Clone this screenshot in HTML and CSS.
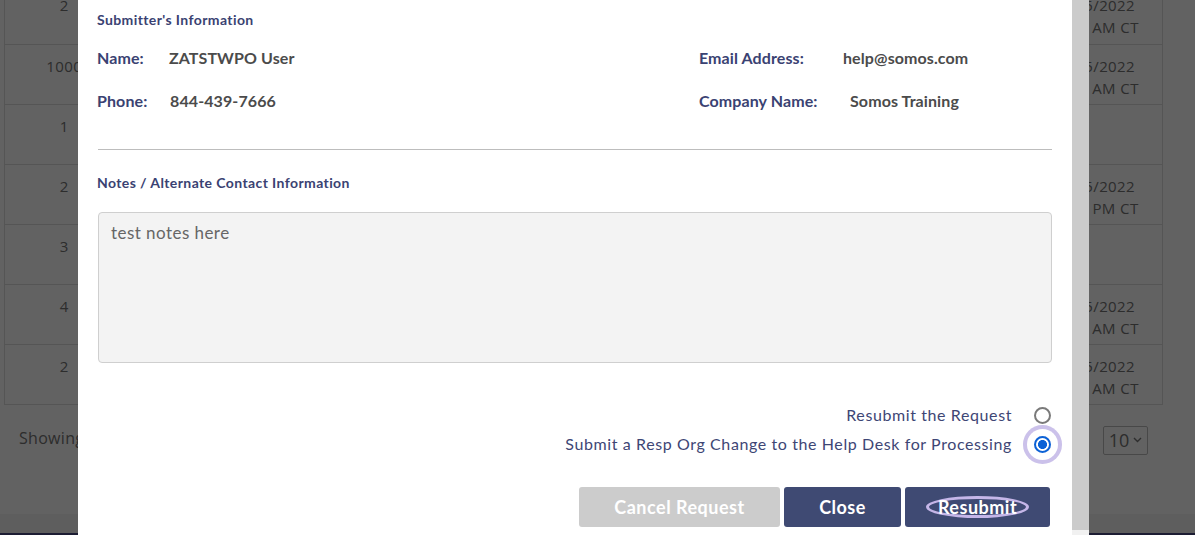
FILE: index.html
```html
<!DOCTYPE html>
<html>
<head>
<meta charset="utf-8">
<link rel="stylesheet" href="styles.css">
</head>
<body>
<div class="page">
  <table class="grid">
    <tr><td class="c-num">2</td><td class="c-mid"></td><td class="c-date">01/25/2022<br>10:41 AM CT</td></tr>
    <tr><td class="c-num">1000</td><td class="c-mid"></td><td class="c-date">01/25/2022<br>10:36 AM CT</td></tr>
    <tr><td class="c-num">1</td><td class="c-mid"></td><td class="c-date"></td></tr>
    <tr><td class="c-num">2</td><td class="c-mid"></td><td class="c-date">01/25/2022<br>12:15 PM CT</td></tr>
    <tr><td class="c-num">3</td><td class="c-mid"></td><td class="c-date"></td></tr>
    <tr><td class="c-num">4</td><td class="c-mid"></td><td class="c-date">01/25/2022<br>10:41 AM CT</td></tr>
    <tr><td class="c-num">2</td><td class="c-mid"></td><td class="c-date">01/25/2022<br>10:36 AM CT</td></tr>
  </table>
  <div class="pager">
    <span class="showing">Showing 1 to 7 of 7 entries</span>
    <span class="pagesize">10 <svg width="9" height="6" viewBox="0 0 9 6"><path d="M1 1l3.5 3.5L8 1" fill="none" stroke="#777" stroke-width="1.4"/></svg></span>
  </div>
  <div class="page-foot"></div>
  <div class="navbar"></div>
</div>
<div class="overlay"></div>
<div class="modal-wrap">
  <div class="modal">
    <h4 class="sec-title">Submitter's Information</h4>
    <div class="info">
      <div class="info-col">
        <div class="field"><span class="lbl lbl-name">Name:</span><span class="val">ZATSTWPO User</span></div>
        <div class="field"><span class="lbl lbl-phone">Phone:</span><span class="val">844-439-7666</span></div>
      </div>
      <div class="info-col">
        <div class="field"><span class="lbl lbl-email">Email Address:</span><span class="val">help@somos.com</span></div>
        <div class="field"><span class="lbl lbl-company">Company Name:</span><span class="val">Somos Training</span></div>
      </div>
    </div>
    <hr class="divider">
    <h4 class="sec-title notes-title">Notes / Alternate Contact Information</h4>
    <div class="notes">test notes here</div>
    <div class="options">
      <div class="opt"><span class="opt-text">Resubmit the Request</span><span class="radio"></span></div>
      <div class="opt"><span class="opt-text">Submit a Resp Org Change to the Help Desk for Processing</span><span class="radio checked"></span></div>
    </div>
    <div class="actions">
      <button class="btn btn-cancel">Cancel Request</button>
      <button class="btn btn-close">Close</button>
      <button class="btn btn-resubmit"><span class="focus-ring">Resubmit</span></button>
    </div>
  </div>
  <div class="scrollbar"><div class="scroll-end"></div></div>
</div>
</body>
</html>
```
FILE: styles.css
```css
* { box-sizing: border-box; }
html, body { margin: 0; padding: 0; }
body {
  width: 1195px;
  height: 535px;
  overflow: hidden;
  background: #fff;
  font-family: "Open Sans", "Liberation Sans", sans-serif;
  position: relative;
}
.page {
  margin-top: -16px;
  display: flex;
  flex-direction: column;
}
.grid {
  margin-left: 4px;
  width: 1159px;
  border-collapse: collapse;
  border-left: 1px solid #dcdcdc;
  border-right: 1px solid #dcdcdc;
  color: #757575;
  font-size: 15px;
  letter-spacing: 0.4px;
}
.grid tr { height: 60px; border-bottom: 1px solid #dcdcdc; }
.grid td { vertical-align: top; padding: 10px 0 0; line-height: 22px; text-align: center; }
.c-num { width: 119px; }
.grid td.c-date { width: 130px; padding-right: 8px; white-space: nowrap; }
.pager {
  height: 109px;
  display: flex;
  align-items: flex-start;
  justify-content: space-between;
  padding: 21px 47px 0 19px;
  color: #757575;
  font-size: 16px;
  letter-spacing: 0.3px;
}
.showing { line-height: 24px; }
.pagesize {
  width: 45px;
  height: 29px;
  border: 1px solid #bbb;
  border-radius: 2px;
  display: flex;
  align-items: center;
  justify-content: center;
  gap: 4px;
  font-size: 18px;
  letter-spacing: 0;
}
.page-foot { height: 19px; background: #f4f4f4; }
.navbar { height: 10px; background: #4a4c85; }
.overlay {
  position: absolute;
  inset: 0;
  background: rgba(0, 0, 0, 0.615);
}
.modal-wrap {
  position: absolute;
  left: 78px;
  top: 0;
  height: 535px;
  display: flex;
}
.modal {
  width: 994px;
  height: 535px;
  background: #fff;
  padding: 10px 20px 0 19px;
  font-family: "Lato", "Liberation Sans", sans-serif;
}
.scrollbar {
  width: 17px;
  height: 535px;
  background: #cbcbcb;
  display: flex;
  flex-direction: column;
  justify-content: flex-end;
}
.scroll-end { height: 5px; background: #f1f1f1; }
.sec-title {
  margin: 0;
  font-size: 14px;
  letter-spacing: 0.4px;
  line-height: 20px;
  font-weight: 700;
  color: #3a4272;
}
.info {
  margin-top: 17px;
  display: flex;
}
.info-col { width: 602px; display: flex; flex-direction: column; gap: 21px; }
.info-col + .info-col { width: auto; }
.field {
  display: flex;
  line-height: 22px;
  font-size: 16px;
  font-weight: 700;
  letter-spacing: 0.1px;
}
.lbl { color: #3a4272; }
.val { color: #4b4b4b; }
.lbl-name { width: 72px; }
.lbl-phone { width: 73px; }
.lbl-email { width: 144px; }
.lbl-company { width: 151px; }
.divider {
  margin: 37px 0 0 1px;
  border: 0;
  border-top: 1px solid #bdbdbd;
  height: 0;
}
.notes-title { margin-top: 23px; }
.notes {
  margin: 19px 0 0 1px;
  height: 151px;
  background: #f3f3f3;
  border: 1px solid #cfcfcf;
  border-radius: 4px;
  padding: 9px 12px;
  color: #666;
  font-size: 17px;
  letter-spacing: 0.45px;
  line-height: 22px;
}
.options {
  margin-top: 41px;
  display: flex;
  flex-direction: column;
  gap: 7px;
  align-items: flex-end;
  padding-right: 1px;
}
.opt {
  display: flex;
  align-items: center;
  gap: 22px;
  line-height: 22px;
  font-size: 16px;
  letter-spacing: 0.6px;
  color: #3e4675;
}
.radio {
  width: 17px;
  height: 17px;
  border: 2px solid #7a7a7a;
  border-radius: 50%;
  background: #fff;
}
.radio.checked {
  border-color: #0b62d6;
  background: radial-gradient(circle, #0b62d6 0 4.2px, #fff 4.8px);
  box-shadow: 0 0 0 7px #fff, 0 0 0 11px #cbc1ea;
}
.actions {
  margin-top: 32px;
  display: flex;
  justify-content: flex-end;
  gap: 4px;
  padding-right: 2px;
}
.btn {
  height: 40px;
  border: 0;
  border-radius: 3px;
  color: #fff;
  font-family: "Lato", "Liberation Sans", sans-serif;
  font-weight: 700;
  font-size: 18px;
  letter-spacing: 0.5px;
  display: flex;
  align-items: center;
  justify-content: center;
  padding: 0;
}
.btn-cancel { width: 201px; background: #cccccc; }
.btn-close { width: 117px; background: #3f4a73; }
.btn-resubmit { width: 145px; background: #3f4a73; }
.focus-ring {
  border: 3px solid #c5b6e8;
  border-radius: 50%;
  padding: 1px 9px;
  line-height: 14px;
}
```
